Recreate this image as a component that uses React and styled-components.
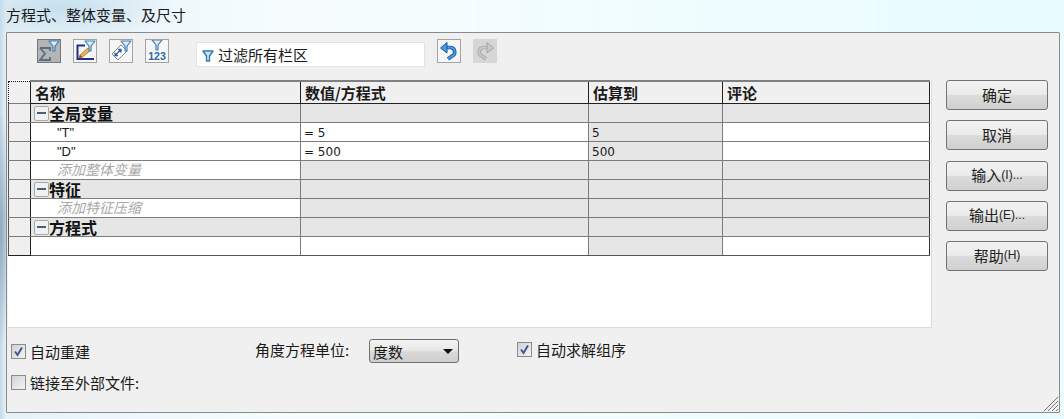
import React from "react";
import styled, { createGlobalStyle } from "styled-components";

const FONT = `"Noto Sans CJK SC", "Liberation Sans", sans-serif`;

const Global = createGlobalStyle`
  html, body { margin: 0; padding: 0; }
  body {
    width: 1064px;
    height: 419px;
    overflow: hidden;
    font-family: ${FONT};
    color: #1a1a1a;
    background:
      radial-gradient(ellipse 120px 34px at 60px 8px, #c6dfee 0, rgba(198, 223, 238, 0) 100%),
      radial-gradient(ellipse 12px 120px at 0 230px, #8fa9bd 0, rgba(143, 169, 189, 0) 100%),
      linear-gradient(90deg, #c4d9e8 0, #e6f2f8 6px, #f7fdff 300px, #e9fcff 1000px);
  }
`;

const Window = styled.div`
  width: 1064px;
  height: 419px;
  padding: 5px 4px 0 6px;
  box-sizing: border-box;
`;

const Title = styled.div`
  height: 27px;
  font-size: 15px;
  line-height: 20px;
`;

const Panel = styled.div`
  position: relative;
  width: 1054px;
  height: 381px;
  box-sizing: border-box;
  background: #f0f0f0;
  border: 1px solid #8a8a8a;
  border-radius: 1px;
  padding: 6px 0 0 1px;
`;

const Toolbar = styled.div`
  display: flex;
  align-items: flex-start;
  height: 41px;
  padding-left: 29px;
`;

const ToolButton = styled.div`
  width: 24px;
  height: 24px;
  margin-right: ${(p) => p.$gap ?? 12}px;
  box-sizing: border-box;
  display: flex;
  align-items: center;
  justify-content: center;
  background: ${(p) => (p.$active ? "#b4b4b4" : p.$disabled ? "#d6d6d6" : "#f6f6f6")};
  border: 1px solid ${(p) => (p.$active ? "#777" : p.$disabled ? "#d6d6d6" : "#a3a3a3")};
`;

const FilterBox = styled.div`
  width: 229px;
  height: 25px;
  margin: 3px 12px 0 0;
  box-sizing: border-box;
  display: flex;
  align-items: center;
  gap: 4px;
  padding: 0 0 0 5px;
  background: #fff;
  border: 1px solid #e3e3e3;
  font-size: 15px;
`;

const Main = styled.div`
  display: flex;
  align-items: flex-start;
  height: 248px;
`;

const GridArea = styled.div`
  width: 924px;
  height: 248px;
  background: #fff;
  border-right: 1px solid #dcdcdc;
  border-bottom: 1px solid #dcdcdc;
  box-sizing: border-box;
  flex: none;
`;

const Table = styled.table`
  width: 921px;
  table-layout: fixed;
  border-collapse: collapse;
  font-size: 12px;
  font-family: "DejaVu Sans", sans-serif;
`;

const HeadCell = styled.th`
  height: 21px;
  padding: 0 0 0 4px;
  text-align: left;
  font-family: ${FONT};
  font-size: 15px;
  font-weight: 700;
  line-height: 16px;
  background: #f0f0f0;
  border: 1px solid #222;
  border-top: 2px solid #808080;
`;

const Corner = styled(HeadCell)`
  border: 1px dotted #111;
  padding: 0;
`;

const Cell = styled.td`
  height: 18px;
  padding: ${(p) => (p.$low ? 2 : 0)}px 0 0 ${(p) => p.$pad ?? 3}px;
  box-sizing: border-box;
  line-height: 16px;
  white-space: nowrap;
  background: ${(p) => p.$bg ?? "#fff"};
  border: 1px solid #7c7c7c;
  border-bottom-color: ${(p) => (p.$end ? "#555" : "#7c7c7c")};
  border-left-color: ${(p) => (p.$first ? "#222" : "#7c7c7c")};
  border-right-color: ${(p) => (p.$last ? "#333" : "#7c7c7c")};
`;

const RowHead = styled.td`
  height: 18px;
  padding: 0;
  background: #efefef;
  border: 1px solid #7c7c7c;
  border-bottom-color: ${(p) => (p.$end ? "#222" : "#7c7c7c")};
  border-right: 1px solid #222;
  border-left: 1px solid #555;
`;

const VarName = styled.span`
  font-family: "Liberation Sans", sans-serif;
  font-size: 13px;
`;

const GroupTitle = styled.div`
  display: flex;
  align-items: center;
  height: 16px;
  margin-top: -1px;
  font-family: ${FONT};
  font-size: 16px;
  font-weight: 700;
  line-height: 16px;
  color: #111;
`;

const Minus = styled.span`
  width: 15px;
  height: 15px;
  margin: 1px 0 0 3px;
  box-sizing: border-box;
  display: flex;
  align-items: center;
  justify-content: center;
  flex: none;
  background: #f1f1f3;
  border: 1px solid #a9a9a9;
  border-radius: 2px;

  &::before {
    content: "";
    width: 9px;
    height: 2px;
    background: #4c5f80;
  }
`;

const Hint = styled.div`
  height: 16px;
  margin-top: -2px;
  font-family: ${FONT};
  font-size: 14px;
  line-height: 16px;
  font-style: italic;
  color: #a8a8a8;
`;

const Side = styled.div`
  display: flex;
  flex-direction: column;
  gap: 10.25px;
  padding-left: 14px;
`;

const Button = styled.div`
  width: 102px;
  height: 30px;
  box-sizing: border-box;
  display: flex;
  align-items: center;
  justify-content: center;
  padding-bottom: 2px;
  font-size: 15px;
  color: #222;
  background: linear-gradient(#f2f2f2 0, #ebebeb 48%, #dcdcdc 50%, #cfcfcf 100%);
  border: 1px solid #737373;
  border-radius: 3px;
`;

const Small = styled.span`
  font-family: "Liberation Sans", sans-serif;
  font-size: 12px;
`;

const Options = styled.div`
  display: flex;
  flex-direction: column;
  gap: 7px;
  padding: 11px 0 0 3px;
`;

const OptionRow = styled.div`
  display: flex;
  align-items: center;
  height: 24px;
`;

const Check = styled.label`
  display: flex;
  align-items: center;
  gap: 4px;
  font-size: 15px;
  width: ${(p) => p.$width ?? "auto"};
  margin-top: ${(p) => p.$up ?? 0}px;
`;

const Box = styled.span`
  width: 15px;
  height: 15px;
  box-sizing: border-box;
  display: flex;
  align-items: center;
  justify-content: center;
  background: linear-gradient(135deg, #d2d2d2, #f4f4f4);
  border: 1px solid #8b8b8b;
`;

const UnitLabel = styled.span`
  width: 114px;
  font-size: 15px;
  margin-top: -3px;
`;

const Select = styled.div`
  width: 90px;
  height: 24px;
  margin-right: 58px;
  box-sizing: border-box;
  display: flex;
  align-items: center;
  justify-content: space-between;
  padding: 0 5px 0 3px;
  font-size: 15px;
  background: linear-gradient(#f3f3f3 0, #e9e9e9 45%, #d8d8d8 55%, #cfcfcf 100%);
  border: 1px solid #6e6e6e;
  border-radius: 3px;

  &::after {
    content: "";
    border-left: 5px solid transparent;
    border-right: 5px solid transparent;
    border-top: 5px solid #111;
  }
`;

const Grip = styled.svg`
  position: absolute;
  right: 0;
  bottom: 0;
`;

const ArrowSvg = styled.svg`
  transform: ${(p) => (p.$flip ? "scaleX(-1)" : "none")};
`;

const Funnel = ({ x = 0, y = 0, c = "#3f7fb5" }) => (
  <path
    transform={`translate(${x} ${y})`}
    d="M0 0h10L6 5v5H4V5z"
    fill="#dcecf7"
    stroke={c}
    strokeWidth="1.2"
    strokeLinejoin="round"
  />
);

const SigmaIcon = () => (
  <svg width="22" height="22" viewBox="0 0 22 22">
    <path d="M2 8h10v3M2 8l5 5.500L2 20h10v-3" fill="none" stroke="#56708a" strokeWidth="1.800" />
    <Funnel x={11} y={1} />
  </svg>
);

const EditIcon = () => (
  <svg width="22" height="22" viewBox="0 0 22 22">
    <path d="M3.500 18V5.500H11M2.500 19H20" fill="none" stroke="#1f2f8a" strokeWidth="2" />
    <path d="M6 15l8-7 2.500 2.500-8 6.500-3.500 1z" fill="#e8b64a" stroke="#8a6a2a" strokeWidth=".7" />
    <path d="M5 18l1-3 2.500 2z" fill="#c0392b" />
    <Funnel x={11} y={1} />
  </svg>
);

const DimIcon = () => (
  <svg width="22" height="22" viewBox="0 0 22 22">
    <path d="M2 14L11 5l6 6-9 9z" fill="#fff" stroke="#777" strokeWidth=".9" />
    <path d="M5 15.500l6-6M5 12.500v3h3M11 12.500v-3H8" fill="none" stroke="#2a5f9e" strokeWidth="1.300" />
    <Funnel x={11} y={1} />
  </svg>
);

const NumberIcon = () => (
  <svg width="22" height="22" viewBox="0 0 22 22">
    <text x="11" y="20" textAnchor="middle" fontFamily="Liberation Sans, sans-serif" fontSize="10.500" fontWeight="700" fill="#2d6aa5">123</text>
    <Funnel x={6} y={0} />
  </svg>
);

const UndoIcon = ({ color = "#4f9be0", edge = "#14579f", flip }) => (
  <ArrowSvg $flip={flip} width="20" height="20" viewBox="0 0 20 20">
    <path d="M5 6.500h6.500a4.500 4.500 0 0 1 1 8.800L9 18" fill="none" stroke={edge} strokeWidth="3.600" />
    <path d="M5 6.500h6.500a4.500 4.500 0 0 1 1 8.800L9 18" fill="none" stroke={color} strokeWidth="1.800" />
    <path d="M8 1.500L1.500 7 8 12z" fill={color} stroke={edge} strokeWidth="1" />
  </ArrowSvg>
);

const Tick = () => (
  <svg width="11" height="11" viewBox="0 0 11 11">
    <path d="M2 5.500l2.500 3.500L9 1.500" fill="none" stroke="#3f5a8f" strokeWidth="2" />
  </svg>
);

const Group = ({ title }) => (
  <tr>
    <RowHead />
    <Cell $bg="#e6e6e6" $pad={0} $first>
      <GroupTitle>
        <Minus />
        {title}
      </GroupTitle>
    </Cell>
    <Cell $bg="#e6e6e6" />
    <Cell $bg="#e6e6e6" />
    <Cell $bg="#e6e6e6" $last />
  </tr>
);

const Variable = ({ name, value, result }) => (
  <tr>
    <RowHead />
    <Cell $pad={26} $first $low><VarName>{name}</VarName></Cell>
    <Cell $low>{value}</Cell>
    <Cell $bg="#e6e6e6" $low>{result}</Cell>
    <Cell $last />
  </tr>
);

const Add = ({ text }) => (
  <tr>
    <RowHead />
    <Cell $pad={26} $first>
      <Hint>{text}</Hint>
    </Cell>
    <Cell $bg="#e6e6e6" />
    <Cell $bg="#e6e6e6" />
    <Cell $bg="#e6e6e6" $last />
  </tr>
);

export default function App() {
  return (
    <Window>
      <Global />
      <Title>方程式、整体变量、及尺寸</Title>
      <Panel>
        <Toolbar>
          <ToolButton $active><SigmaIcon /></ToolButton>
          <ToolButton><EditIcon /></ToolButton>
          <ToolButton><DimIcon /></ToolButton>
          <ToolButton $gap={27}><NumberIcon /></ToolButton>
          <FilterBox>
            <svg width="12" height="12" viewBox="0 0 12 12" style={{ marginTop: 2 }}>
              <path d="M1 1h10L7.500 6v5h-3V6z" fill="#cfe4f3" stroke="#2f79ad" strokeWidth="1.400" strokeLinejoin="round" />
            </svg>
            过滤所有栏区
          </FilterBox>
          <ToolButton><UndoIcon /></ToolButton>
          <ToolButton $disabled><UndoIcon color="#c9c9c9" edge="#a5a5a5" flip /></ToolButton>
        </Toolbar>
        <Main>
          <GridArea>
            <Table>
              <colgroup>
                <col width="22" />
                <col width="270" />
                <col width="288" />
                <col width="134" />
                <col width="207" />
              </colgroup>
              <thead>
                <tr>
                  <Corner />
                  <HeadCell>名称</HeadCell>
                  <HeadCell>数值/方程式</HeadCell>
                  <HeadCell>估算到</HeadCell>
                  <HeadCell>评论</HeadCell>
                </tr>
              </thead>
              <tbody>
                <Group title="全局变量" />
                <Variable name={'"T"'} value="= 5" result="5" />
                <Variable name={'"D"'} value="= 500" result="500" />
                <Add text="添加整体变量" />
                <Group title="特征" />
                <Add text="添加特征压缩" />
                <Group title="方程式" />
                <tr>
                  <RowHead $end />
                  <Cell $first $end />
                  <Cell $end />
                  <Cell $bg="#e6e6e6" $end />
                  <Cell $last $end />
                </tr>
              </tbody>
            </Table>
          </GridArea>
          <Side>
            <Button>确定</Button>
            <Button>取消</Button>
            <Button>输入<Small>(I)...</Small></Button>
            <Button>输出<Small>(E)...</Small></Button>
            <Button>帮助<Small>(H)</Small></Button>
          </Side>
        </Main>
        <Options>
          <OptionRow>
            <Check $width="244px"><Box><Tick /></Box>自动重建</Check>
            <UnitLabel>角度方程单位:</UnitLabel>
            <Select>度数</Select>
            <Check $up={-4}><Box><Tick /></Box>自动求解组序</Check>
          </OptionRow>
          <OptionRow>
            <Check><Box />链接至外部文件:</Check>
          </OptionRow>
        </Options>
        <Grip width="16" height="16" viewBox="0 0 16 16">
          <path d="M1 15L15 1M5 15L15 5M9 15l6-6M13 15l2-2" stroke="#777" strokeWidth="1" fill="none" />
        </Grip>
      </Panel>
    </Window>
  );
}
